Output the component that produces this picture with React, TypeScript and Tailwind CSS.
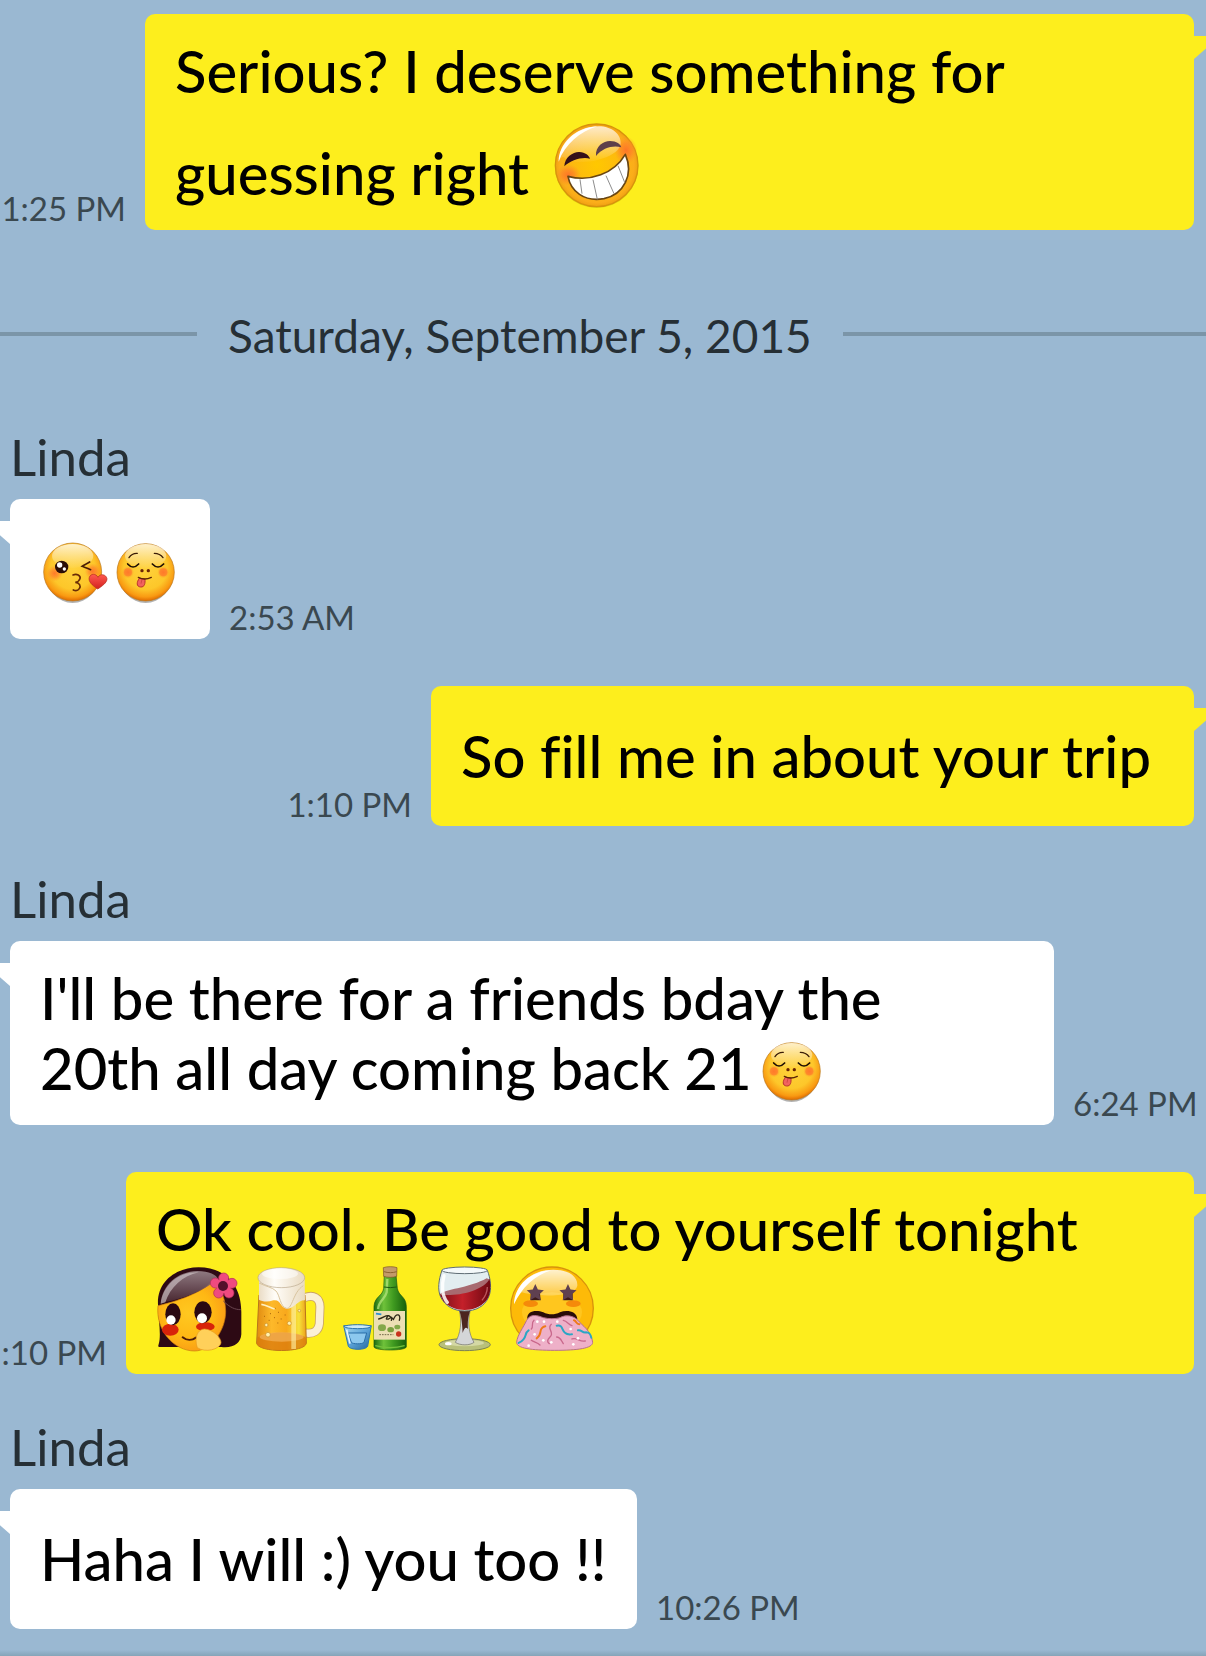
import React from 'react';

interface IconProps {
  className?: string;
}

const star = (cx: number, cy: number, r: number) => {
  const points: string[] = [];
  for (let i = 0; i < 10; i++) {
    const radius = i % 2 === 0 ? r : r * 0.48;
    const angle = (Math.PI / 5) * i - Math.PI / 2;
    points.push(`${cx + radius * Math.cos(angle)},${cy + radius * Math.sin(angle)}`);
  }
  return points.join(' ');
};

// gradients shared by every sticker
const Gradients: React.FC = () => (
  <svg className="absolute size-0" aria-hidden="true">
    <defs>
      <radialGradient id="face" cx="0.5" cy="0.42" r="0.58">
        <stop offset="0" stopColor="#ffd23c" />
        <stop offset="0.65" stopColor="#fdc72a" />
        <stop offset="0.88" stopColor="#f99a12" />
        <stop offset="1" stopColor="#e06a00" />
      </radialGradient>
      <radialGradient id="grinFace" cx="0.5" cy="0.5" r="0.5">
        <stop offset="0" stopColor="#ffc800" />
        <stop offset="0.6" stopColor="#fdb90f" />
        <stop offset="0.9" stopColor="#fbad1a" />
        <stop offset="1" stopColor="#f0a013" />
      </radialGradient>
      <linearGradient id="shine" x1="0" y1="0" x2="0" y2="1">
        <stop offset="0" stopColor="#fff" stopOpacity="0.95" />
        <stop offset="1" stopColor="#fff" stopOpacity="0.05" />
      </linearGradient>
      <linearGradient id="hairShine" x1="0" y1="0" x2="0" y2="1">
        <stop offset="0" stopColor="#a08d94" />
        <stop offset="1" stopColor="#4a2832" />
      </linearGradient>
      <radialGradient id="blush">
        <stop offset="0" stopColor="#ff6a2a" stopOpacity="0.85" />
        <stop offset="0.5" stopColor="#ff7a2a" stopOpacity="0.6" />
        <stop offset="1" stopColor="#ff8a2a" stopOpacity="0" />
      </radialGradient>
      <linearGradient id="heart" x1="0" y1="0" x2="0" y2="1">
        <stop offset="0" stopColor="#ff5a50" />
        <stop offset="1" stopColor="#d3201f" />
      </linearGradient>
      <linearGradient id="beer" x1="0" y1="0" x2="1" y2="0">
        <stop offset="0" stopColor="#e08a10" />
        <stop offset="0.3" stopColor="#fdb92a" />
        <stop offset="0.6" stopColor="#f8a81c" />
        <stop offset="0.85" stopColor="#f6e23a" />
        <stop offset="1" stopColor="#eda01a" />
      </linearGradient>
      <linearGradient id="foam" x1="0" y1="0" x2="1" y2="0">
        <stop offset="0" stopColor="#eadcc6" />
        <stop offset="0.35" stopColor="#fffdf8" />
        <stop offset="1" stopColor="#e9dac0" />
      </linearGradient>
      <linearGradient id="bottle" x1="0" y1="0" x2="1" y2="0">
        <stop offset="0" stopColor="#1d6b12" />
        <stop offset="0.3" stopColor="#6fc23a" />
        <stop offset="0.6" stopColor="#3f9a20" />
        <stop offset="1" stopColor="#17600c" />
      </linearGradient>
      <linearGradient id="cup" x1="0" y1="0" x2="1" y2="1">
        <stop offset="0" stopColor="#a8daf2" />
        <stop offset="0.5" stopColor="#5da4d8" />
        <stop offset="1" stopColor="#22669e" />
      </linearGradient>
      <linearGradient id="wine" x1="0" y1="0" x2="1" y2="0">
        <stop offset="0" stopColor="#7a0f1a" />
        <stop offset="0.45" stopColor="#c4202a" />
        <stop offset="1" stopColor="#6e0812" />
      </linearGradient>
      <radialGradient id="girlSkin" cx="0.45" cy="0.45" r="0.6">
        <stop offset="0" stopColor="#ffc820" />
        <stop offset="0.6" stopColor="#ffb814" />
        <stop offset="1" stopColor="#f99a16" />
      </radialGradient>
    </defs>
  </svg>
);

const GrinIcon: React.FC<IconProps> = ({ className }) => (
  <svg className={className} viewBox="0 0 88 88" role="img" aria-label="Grinning face">
    <g transform="translate(-23 -9) scale(0.3333)">
      <circle cx="200" cy="166" r="125" fill="#a8a800" opacity="0.4" />
      <circle cx="200" cy="163" r="124" fill="url(#grinFace)" stroke="#d8920c" strokeWidth="4" />
      <ellipse cx="115" cy="192" rx="38" ry="32" fill="url(#blush)" />
      <ellipse cx="288" cy="118" rx="34" ry="42" fill="url(#blush)" />
      <path d="M86 152 C88 92 140 46 206 46 C246 46 274 70 272 98 C266 142 160 164 110 148 C98 128 92 142 86 152Z" fill="url(#shine)" opacity="0.8" />
      <path d="M86 152 C86 100 134 50 202 46 C150 62 106 98 86 152Z" fill="#fff" />
      <path d="M103 166 C104 138 130 122 148 123 C166 124 178 134 180 143 C160 136 122 146 103 166Z" fill="#35101a" />
      <path d="M198 135 C196 106 220 90 240 90 C260 90 272 100 274 109 C250 102 218 110 198 135Z" fill="#5f3f4a" />
      <path d="M114 196 C180 214 252 188 286 130 C312 190 282 250 222 263 C162 274 122 240 114 196Z" fill="#fff" stroke="#6a4612" strokeWidth="5" strokeLinejoin="round" />
      <path d="M150 205 L156 248 M189 206 L202 265 M228 194 L252 248 M264 164 L284 214" stroke="#8d8d8d" strokeWidth="3" />
    </g>
  </svg>
);

const KissIcon: React.FC<IconProps> = ({ className }) => (
  <svg className={className} viewBox="0 0 70 70" role="img" aria-label="Face blowing a kiss">
    <g transform="translate(-40 -44) scale(0.3333)">
      <ellipse cx="218" cy="252" rx="80" ry="87" fill="#555" opacity="0.45" />
      <circle cx="218" cy="246" r="87" fill="url(#face)" stroke="#b8791c" strokeWidth="2" />
      <ellipse cx="218" cy="198" rx="62" ry="36" fill="url(#shine)" opacity="0.8" />
      <circle cx="164" cy="250" r="24" fill="url(#blush)" />
      <circle cx="278" cy="244" r="24" fill="url(#blush)" />
      <ellipse cx="185" cy="231" rx="20" ry="19" fill="#2a0d06" />
      <circle cx="179" cy="225" r="8" fill="#fff" />
      <circle cx="193" cy="237" r="5" fill="#fff" />
      <path d="M269 216 C260 222 252 224 246 229 C254 232 262 234 272 239" fill="none" stroke="#4a1e06" strokeWidth="5" strokeLinecap="round" />
      <path d="M219 255 C230 250 243 256 240 266 C238 274 232 276 226 277 C238 278 244 288 238 296 C234 302 226 303 220 300" fill="none" stroke="#6a2c06" strokeWidth="5" strokeLinecap="round" />
      <path d="M293 297 C276 286 264 274 268 262 C272 250 288 250 294 262 C300 250 318 252 321 266 C322 278 304 290 293 297Z" fill="url(#heart)" stroke="#b02a1c" strokeWidth="2" />
    </g>
  </svg>
);

const TongueIcon: React.FC<IconProps> = ({ className }) => (
  <svg className={className} viewBox="0 0 70 70" role="img" aria-label="Face savoring food">
    <g transform="translate(-110 -44) scale(0.3333)">
      <ellipse cx="437" cy="253" rx="80" ry="86" fill="#555" opacity="0.45" />
      <circle cx="437" cy="247" r="86" fill="url(#face)" stroke="#b8791c" strokeWidth="2" />
      <ellipse cx="437" cy="198" rx="62" ry="36" fill="url(#shine)" opacity="0.8" />
      <circle cx="384" cy="247" r="18" fill="url(#blush)" />
      <circle cx="384" cy="247" r="12" fill="#ff7a2c" opacity="0.6" />
      <circle cx="490" cy="247" r="18" fill="url(#blush)" />
      <circle cx="490" cy="247" r="12" fill="#ff7a2c" opacity="0.6" />
      <path d="M387 203 Q396 189 412 190 M463 190 Q480 190 489 203" fill="none" stroke="#3a1c06" strokeWidth="4" strokeLinecap="round" />
      <path d="M383 222 Q399 240 416 222 M457 222 Q474 240 491 222" fill="none" stroke="#1e0e04" strokeWidth="5" strokeLinecap="round" />
      <circle cx="426" cy="242" r="5" fill="#6a2404" />
      <circle cx="445" cy="242" r="5" fill="#6a2404" />
      <path d="M418 265 C410 276 408 290 422 291 C434 292 436 280 435 267Z" fill="#f2625f" stroke="#b8332c" strokeWidth="3" />
      <path d="M426 268 L423 281" stroke="#c03c38" strokeWidth="2" />
      <path d="M415 262 Q434 272 454 262" fill="none" stroke="#5a2404" strokeWidth="4" strokeLinecap="round" />
    </g>
  </svg>
);

const GirlIcon: React.FC<IconProps> = ({ className }) => (
  <svg className={className} viewBox="0 0 88 88" role="img" aria-label="Shy girl">
    <g transform="translate(-16 -9) scale(0.3333)">
      <path d="M54 150 C50 78 110 37 176 37 C256 37 304 90 304 170 L304 238 C302 266 280 280 244 276 L60 276 C54 276 54 274 56 268 C64 240 56 200 54 150Z" fill="#2d0a14" />
      <path d="M54 152 C110 140 186 112 214 82 C236 88 256 120 257 168 C258 224 214 288 164 288 C102 288 46 226 54 152Z" fill="url(#girlSkin)" stroke="#c9780e" strokeWidth="2" />
      <path d="M62 146 C66 90 112 50 172 48 C208 48 230 60 234 72 C190 110 120 134 78 140Z" fill="url(#hairShine)" opacity="0.85" />
      <path d="M62 146 C68 90 116 50 176 52 C128 62 90 98 76 142Z" fill="#cfc4c8" opacity="0.65" />
      <path d="M250 138 C270 158 286 164 302 164" fill="none" stroke="#6a4650" strokeWidth="3" />
      <ellipse cx="91" cy="224" rx="25" ry="18" fill="#d8230a" />
      <ellipse cx="196" cy="215" rx="28" ry="13" fill="#d8230a" />
      <ellipse cx="99" cy="178" rx="23" ry="33" fill="#2a0812" />
      <ellipse cx="189" cy="172" rx="26" ry="33" fill="#2a0812" />
      <circle cx="93" cy="195" r="14" fill="#fff" />
      <circle cx="186" cy="190" r="15" fill="#fff" />
      <path d="M128 247 C140 257 156 257 168 248" fill="none" stroke="#4a1a08" strokeWidth="6" strokeLinecap="round" />
      <path d="M172 278 C162 250 172 222 194 222 C220 224 244 248 243 264 C238 284 196 294 172 278Z" fill="#ffd05a" stroke="#e79a1c" strokeWidth="2" />
      <g fill="#ef4a80" stroke="#b02a58" strokeWidth="2">
        <circle cx="251" cy="69" r="15" />
        <circle cx="276" cy="85" r="15" />
        <circle cx="267" cy="114" r="15" />
        <circle cx="236" cy="114" r="15" />
        <circle cx="226" cy="84" r="15" />
      </g>
      <circle cx="251" cy="93" r="22" fill="#ef4a80" />
      <circle cx="249" cy="93" r="15" fill="#54102c" />
    </g>
  </svg>
);

const BeerIcon: React.FC<IconProps> = ({ className }) => (
  <svg className={className} viewBox="0 0 88 88" role="img" aria-label="Beer mug">
    <g transform="translate(-104 -9) scale(0.3333)">
      <path d="M494 128 C520 118 540 128 540 156 L538 206 C536 228 520 238 496 234" fill="none" stroke="#c9a266" strokeWidth="27" />
      <path d="M494 128 C520 118 540 128 540 156 L538 206 C536 228 520 238 496 234" fill="none" stroke="#fbf0d6" strokeWidth="22" />
      <path d="M357 120 L350 264 C352 294 498 294 499 264 L495 120Z" fill="url(#beer)" stroke="#b8741a" strokeWidth="3" />
      <path d="M352 248 C380 228 470 228 498 248 L499 264 C494 294 352 292 350 264Z" fill="#d9780c" opacity="0.75" />
      <ellipse cx="425" cy="246" rx="66" ry="14" fill="#f4b25a" opacity="0.7" />
      <rect x="454" y="130" width="14" height="152" fill="#fff3a8" opacity="0.6" />
      <path d="M357 68 L494 68 L495 136 C470 136 464 162 440 161 C420 158 424 132 400 136 C384 142 366 140 357 134Z" fill="url(#foam)" />
      <ellipse cx="424" cy="68" rx="70" ry="30" fill="url(#foam)" stroke="#b9a88c" strokeWidth="2" />
      <ellipse cx="420" cy="56" rx="54" ry="16" fill="#fff" opacity="0.55" />
      <path d="M357 84 C380 96 396 96 408 108 C420 120 420 156 440 160 C458 162 458 112 490 92" fill="none" stroke="#d8c4a0" strokeWidth="3" />
      <g fill="#fff0b0" stroke="#c98c24" strokeWidth="2">
        <circle cx="384" cy="239" r="7" />
        <circle cx="379" cy="210" r="5" />
        <circle cx="448" cy="205" r="6" />
        <circle cx="478" cy="167" r="4" />
      </g>
      <path d="M372 184 h3 M390 176 h3 M402 188 h3 M414 172 h3 M422 192 h3 M404 160 h3 M386 196 h3 M434 180 h3 M412 204 h3" stroke="#a8640c" strokeWidth="3" />
      <path d="M364 148 C380 150 390 158 404 162" fill="none" stroke="#fff0c0" strokeWidth="5" />
    </g>
  </svg>
);

const SojuIcon: React.FC<IconProps> = ({ className }) => (
  <svg className={className} viewBox="0 0 88 88" role="img" aria-label="Soju bottle and glass">
    <g transform="translate(-2 -9) scale(0.3333)">
      <path d="M41 212 L124 212 L113 274 C108 286 60 286 55 274Z" fill="url(#cup)" stroke="#2d74ae" strokeWidth="3" />
      <ellipse cx="83" cy="215" rx="40" ry="6" fill="#cdeaf6" stroke="#2d74ae" strokeWidth="3" />
      <path d="M54 234 L110 234 L102 262 C98 268 68 268 64 262Z" fill="#8cc8ee" stroke="#2a6ea8" strokeWidth="3" />
      <path d="M50 224 L60 266" stroke="#e4f6ff" strokeWidth="5" />
      <path d="M163 60 L198 60 L202 100 C206 124 228 124 229 154 L229 276 C226 288 136 288 132 276 L132 154 C134 124 158 124 161 100Z" fill="url(#bottle)" stroke="#1a5a10" strokeWidth="2" />
      <path d="M172 72 L170 112 C166 132 146 136 144 162" fill="none" stroke="#b4e47c" strokeWidth="7" opacity="0.75" />
      <path d="M160 38 C170 34 192 34 201 38 L200 64 C190 68 172 68 161 64Z" fill="#c39a6a" stroke="#7c5226" strokeWidth="2" />
      <path d="M162 50 C174 54 188 54 200 50" fill="none" stroke="#8c6232" strokeWidth="3" />
      <path d="M162 96 Q181 100 200 96" fill="none" stroke="#1a5a10" strokeWidth="3" />
      <path d="M132 168 L225 168 L225 254 L132 254Z" fill="#ecdfb4" />
      <path d="M138 176 L154 178" stroke="#2c8ed0" strokeWidth="5" />
      <path d="M146 192 C158 190 168 180 174 182 C170 190 164 194 176 192 C184 188 188 182 184 196 M190 194 C200 170 214 180 208 196 M176 182 L190 192" fill="none" stroke="#2e2a18" strokeWidth="4" strokeLinecap="round" />
      <ellipse cx="156" cy="218" rx="12" ry="10" fill="#84a84a" />
      <ellipse cx="182" cy="224" rx="10" ry="8" fill="#7aa040" />
      <ellipse cx="202" cy="216" rx="9" ry="7" fill="#84a84a" />
      <path d="M148 239 H190" stroke="#74694a" strokeWidth="3" strokeDasharray="5 3" />
      <circle cx="206" cy="237" r="8" fill="#c8321c" />
      <path d="M136 272 Q180 284 224 272" fill="none" stroke="#74c23c" strokeWidth="4" />
    </g>
  </svg>
);

const WineIcon: React.FC<IconProps> = ({ className }) => (
  <svg className={className} viewBox="0 0 88 88" role="img" aria-label="Wine glass">
    <g transform="translate(-90 -9) scale(0.3333)">
      <ellipse cx="404" cy="269" rx="77" ry="18" fill="#b9c07a" stroke="#7c8250" strokeWidth="3" />
      <ellipse cx="404" cy="264" rx="58" ry="10" fill="#d4d8a4" />
      <path d="M388 166 L421 166 C412 200 416 236 432 262 C420 272 390 272 376 262 C392 236 396 200 388 166Z" fill="#d4d6d8" stroke="#6c6c70" strokeWidth="2" />
      <path d="M388 166 L421 166 C414 186 413 200 414 222 C408 216 404 216 398 234 C396 200 394 186 388 166Z" fill="#4c2620" />
      <path d="M336 46 C326 74 322 104 332 126 C346 154 372 168 404 168 C438 168 464 154 476 126 C486 104 482 70 472 46Z" fill="#e2edf0" stroke="#5e6c74" strokeWidth="3" />
      <path d="M329 118 C370 122 430 100 479 72 C484 100 480 124 468 138 C436 174 372 174 340 138Z" fill="url(#wine)" />
      <path d="M330 116 C360 100 420 98 470 70 L478 73 C464 104 380 130 330 116Z" fill="#a86a70" />
      <ellipse cx="404" cy="46" rx="68" ry="10" fill="#f4f9fa" stroke="#5e6c74" strokeWidth="3" />
      <path d="M342 62 C334 92 336 124 352 142" fill="none" stroke="#fff" strokeWidth="10" strokeLinecap="round" opacity="0.85" />
      <path d="M456 136 C466 124 472 114 472 96" fill="none" stroke="#e88a8c" strokeWidth="4" opacity="0.6" />
      <ellipse cx="355" cy="266" rx="10" ry="5" fill="#fff" />
    </g>
  </svg>
);

const StarryIcon: React.FC<IconProps> = ({ className }) => (
  <svg className={className} viewBox="0 0 88 88" role="img" aria-label="Starry-eyed face throwing up">
    <g transform="translate(-178 -9) scale(0.3333)">
      <circle cx="666" cy="160" r="124" fill="#fdba08" stroke="#d8920c" strokeWidth="4" />
      <ellipse cx="666" cy="172" rx="90" ry="60" fill="#ffc61e" />
      <path d="M552 148 C556 86 606 44 670 44 C712 44 744 62 742 92 C736 128 620 126 576 112 C562 122 558 134 552 148Z" fill="url(#shine)" opacity="0.85" />
      <path d="M552 148 C554 90 604 48 664 46 C612 62 576 98 552 148Z" fill="#fff" />
      <ellipse cx="602" cy="146" rx="22" ry="10" fill="#f58a0a" />
      <ellipse cx="730" cy="146" rx="22" ry="10" fill="#f58a0a" />
      <path d="M602 114 L630 114 L632 136 L602 136Z M700 114 L728 114 L728 136 L700 136Z" fill="#3c1a18" />
      <polygon points={star(616, 114, 27)} fill="#5f4050" />
      <polygon points={star(714, 114, 27)} fill="#5f4050" />
      <path d="M592 192 C590 166 620 164 640 172 C656 180 674 180 690 172 C710 164 740 168 742 192Z" fill="#2a0c08" />
      <path d="M590 196 C602 174 624 182 640 188 C656 192 676 192 690 188 C708 178 730 182 744 196 C756 212 784 226 788 262 C788 280 744 286 674 286 C604 286 560 280 560 262 C562 240 580 218 590 196Z" fill="#eeb0c8" stroke="#b8708c" strokeWidth="3" />
      <g fill="none" strokeWidth="6" strokeLinecap="round">
        <path d="M596 226 C580 236 596 248 566 264" stroke="#2aa6c4" />
        <path d="M646 214 C622 220 640 238 620 250" stroke="#ee7a1a" />
        <path d="M680 212 C700 208 694 226 706 234 C712 240 720 238 726 238" stroke="#2aa6c4" />
        <path d="M732 196 C740 198 738 208 748 208" stroke="#ee7a1a" />
        <path d="M744 226 C756 224 756 234 768 232 C780 232 782 240 784 248" stroke="#2aa6c4" />
        <g stroke="#c9688c" strokeWidth="4">
          <path d="M664 208 C648 222 676 232 660 246 C650 256 652 262 658 266" />
          <path d="M612 196 C602 206 612 214 604 222" />
          <path d="M680 246 C692 246 694 258 700 266" />
          <path d="M726 252 C742 246 748 262 766 258" />
          <path d="M700 196 C712 198 716 210 726 212" />
          <path d="M604 256 C612 262 622 262 630 270" />
        </g>
      </g>
      <g fill="#fff">
        <circle cx="622" cy="200" r="4" />
        <circle cx="642" cy="200" r="4" />
        <circle cx="682" cy="200" r="4" />
        <circle cx="614" cy="238" r="4" />
        <circle cx="664" cy="262" r="4" />
        <circle cx="722" cy="222" r="4" />
        <circle cx="744" cy="250" r="4" />
        <circle cx="730" cy="268" r="4" />
        <circle cx="640" cy="256" r="4" />
        <circle cx="596" cy="272" r="4" />
      </g>
    </g>
  </svg>
);

interface MessageProps {
  mine?: boolean;
  sender?: string;
  time: string;
  bubbleClass?: string;
  timeClass?: string;
  children: React.ReactNode;
}

const Message: React.FC<MessageProps> = ({
  mine = false,
  sender,
  time,
  bubbleClass = '',
  timeClass = '',
  children,
}) => (
  <article className={mine ? 'pr-3' : 'pl-[10px]'}>
    {sender && (
      <h2 className="mb-4 text-[51px] leading-[52px] font-normal text-[#262f35]">{sender}</h2>
    )}
    <div className={`flex items-end gap-[19px] ${mine ? 'flex-row-reverse' : ''}`}>
      <div
        className={`relative flex min-h-[140px] flex-col justify-center rounded-[10px] px-[30px] py-[22px] text-[58px] leading-[70px] font-medium text-black ${
          mine ? 'bg-[#fdee1d]' : 'bg-white'
        } ${bubbleClass}`}
      >
        {children}
        {/* tail */}
        <svg
          className={`absolute top-[22px] h-[23px] w-[26px] ${
            mine ? 'left-full text-[#fdee1d]' : 'right-full text-white'
          }`}
          viewBox="0 0 26 23"
          aria-hidden="true"
        >
          <path d={mine ? 'M0 0H26L0 23Z' : 'M26 0H0L26 23Z'} fill="currentColor" />
        </svg>
      </div>
      <time
        className={`flex shrink-0 text-[33px] leading-[44px] whitespace-nowrap text-[#3a4850] ${
          mine ? 'justify-end' : ''
        } ${timeClass}`}
      >
        {time}
      </time>
    </div>
  </article>
);

const DateDivider: React.FC<{ label: string }> = ({ label }) => (
  <div className="mt-[29px] mb-[22px] flex items-center gap-[31px]">
    <div className="h-1 w-[197px] bg-[#7b95a8]" />
    <span className="pt-1 text-[46px] leading-[52px] text-[#262f35]">{label}</span>
    <div className="h-1 flex-1 bg-[#7b95a8]" />
  </div>
);

const App: React.FC = () => {
  return (
    <main className="relative flex min-h-screen flex-col overflow-hidden bg-[#9ab8d2] font-['Lato',sans-serif] [font-variant-ligatures:none]">
      <Gradients />
      <div className="flex flex-col gap-[47px] pt-[14px]">
        <Message mine time="1:25 PM" bubbleClass="flex-1" timeClass="w-[126px]">
          <p>Serious? I deserve something for</p>
          <p className="flex items-end gap-6 pt-[14px]">
            guessing right
            <GrinIcon className="size-22" />
          </p>
        </Message>

        <DateDivider label="Saturday, September 5, 2015" />

        <Message sender="Linda" time="2:53 AM">
          <p className="flex">
            <KissIcon className="size-[70px]" />
            <TongueIcon className="size-[70px]" />
          </p>
        </Message>

        <Message mine time="1:10 PM" bubbleClass="min-w-[763px]">
          <p>So fill me in about your trip</p>
        </Message>

        <Message sender="Linda" time="6:24 PM" bubbleClass="flex-1" timeClass="w-[133px]">
          <p>I'll be there for a friends bday the</p>
          <p className="flex items-end gap-1">
            20th all day coming back 21
            <TongueIcon className="size-[70px]" />
          </p>
        </Message>

        <Message mine time=":10 PM" bubbleClass="flex-1" timeClass="w-[107px]">
          <p>Ok cool. Be good to yourself tonight</p>
          <p className="flex">
            <GirlIcon className="size-22" />
            <BeerIcon className="size-22" />
            <SojuIcon className="size-22" />
            <WineIcon className="size-22" />
            <StarryIcon className="size-22" />
          </p>
        </Message>

        <Message sender="Linda" time="10:26 PM" bubbleClass="min-w-[627px]">
          <p>Haha I will :) you too !!</p>
        </Message>
      </div>
      <div className="mt-auto h-[6px] bg-linear-to-b from-[#9ab8d2] to-[#86a4b8]" />
    </main>
  );
};

export default App;
